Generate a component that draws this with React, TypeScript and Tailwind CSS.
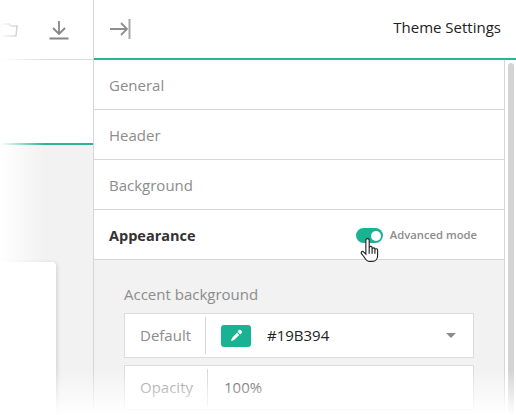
const rows = ["General", "Header", "Background"];

function LeftPane() {
  return (
    <div className="flex w-[93px] flex-col">
      <div className="flex h-[60px] items-center justify-between border-b border-[#dcdcdc] pr-[24px]">
        <svg width="18" height="16" viewBox="0 0 18 16" fill="none" stroke="#8a8a8a" strokeWidth="1.500">
          <path d="M1 2h8l2 2h6l-1 10H1z" />
        </svg>
        <svg width="20" height="20" viewBox="0 0 20 20" fill="none" stroke="#858585" strokeWidth="1.800">
          <path d="M10 1v13M4 8l6 6 6-6M.5 18.500h19" />
        </svg>
      </div>
      <div className="h-[85px] border-b-2 border-[#2bb396]" />
      <div className="flex-1 bg-[#f2f2f2] pt-[117px]">
        <div className="h-full w-[56px] rounded-tr-[4px] bg-white shadow-[1px_1px_4px_rgba(0,0,0,0.15)]" />
      </div>
    </div>
  );
}

function HandCursor() {
  return (
    <svg width="19" height="25" viewBox="0 0 18 24" fill="white" stroke="#222" strokeWidth="1.100" className="absolute top-[11px] left-[4px]">
      <path d="M5.500 2.200a1.600 1.600 0 0 1 3.200 0V9.500a1.400 1.400 0 0 1 2.800 0v1a1.400 1.400 0 0 1 2.700 0v1a1.300 1.300 0 0 1 2.600.3v4.700c0 3.500-2 6-5 6H9c-2.500 0-3.500-1.500-5-4L1.300 15c-.8-1.300.8-2.800 2-1.700l2.200 2.200z" />
      <path d="M8.700 9.500V15M11.500 10.500V15M14.200 11.500V15" fill="none" />
    </svg>
  );
}

function SettingsPane() {
  return (
    <div className="flex min-w-0 flex-1 flex-col border-l border-[#d6d6d6]">
      <div className="flex h-[60px] items-center justify-between border-b-2 border-[#2bb396] pr-[15px] pl-[16px]">
        <svg width="22" height="20" viewBox="0 0 22 20" fill="none" stroke="#8f8f8f" strokeWidth="1.800">
          <path d="M0 10h17M11 4l6 6-6 6" />
          <path d="M19.500 0v20" stroke="#a8a8a8" strokeWidth="2" />
        </svg>
        <span className="mb-[4px] text-[15px] text-[#222]">Theme Settings</span>
      </div>
      <div className="flex min-h-0 flex-1">
        <div className="flex w-[411px] flex-col border-r border-[#d6d6d6]">
          {rows.map((r) => (
            <div key={r} className="flex h-[50px] shrink-0 items-center border-b border-[#d6d6d6] pt-[2px] pl-[15px] text-[15px] text-[#8c8c8c]">
              {r}
            </div>
          ))}
          <div className="flex h-[50px] shrink-0 items-center justify-between border-b border-[#d6d6d6] pt-[2px] pr-[27px] pl-[15px]">
            <span className="text-[14.500px] font-bold text-[#333]">Appearance</span>
            <div className="relative flex items-center gap-[7px]">
              <div className="flex h-[15px] w-[27px] items-center justify-end rounded-full bg-[#19b394] pr-[2px]">
                <div className="h-[10px] w-[10px] rounded-full bg-white" />
              </div>
              <span className="text-[11.250px] font-semibold text-[#8c8c8c]">Advanced mode</span>
              <HandCursor />
            </div>
          </div>
          <div className="flex-1 bg-[#f2f2f2] px-[30px] pt-[24px]">
            <div className="text-[15px] leading-[20px] text-[#8c8c8c]">Accent background</div>
            <div className="mt-[9px] flex h-[45px] items-center border border-[#dcdcdc] bg-white">
              <div className="flex h-[37px] w-[81px] items-center border-r border-[#d6d6d6] pl-[15px] text-[15px] text-[#8c8c8c]">Default</div>
              <div className="ml-[15px] flex h-[22px] w-[30px] items-center justify-center rounded-[3px] bg-[#19b394]">
                <svg width="13" height="13" viewBox="0 0 12 12" fill="white">
                  <path d="M7.500 1.500c1-1 2.200-1 3 0s.7 2-.2 2.800L9.500 5 7 2.500zM6.500 3.500l2 2L4 10 1.500 11 1 10.500 2 8z" />
                </svg>
              </div>
              <span className="ml-[16px] text-[15px] text-[#222]">#19B394</span>
              <svg width="10" height="5" viewBox="0 0 10 5" fill="#8c8c8c" className="mr-[17px] ml-auto">
                <path d="M0 0h10L5 5z" />
              </svg>
            </div>
            <div className="mt-[7px] flex h-[45px] items-center border border-[#dcdcdc] bg-white">
              <div className="flex h-[37px] w-[83px] items-center border-r border-[#d6d6d6] pl-[15px] text-[15px] text-[#8c8c8c]">Opacity</div>
              <span className="ml-[16px] text-[15px] text-[#444]">100%</span>
            </div>
          </div>
        </div>
        <div className="flex-1 pt-[3px] pl-[3px]">
          <div className="h-full w-[6px] rounded-t-[3px] bg-[#d4d4d4]" />
        </div>
      </div>
    </div>
  );
}

export default function App() {
  return (
    <div className="relative flex h-[415px] w-[516px] overflow-hidden bg-white font-['Open_Sans',sans-serif]">
      <LeftPane />
      <SettingsPane />
      {/* soft fades over the screenshot edges */}
      <div className="pointer-events-none absolute inset-y-0 left-0 w-[45px] bg-gradient-to-r from-white to-transparent" />
      <div className="pointer-events-none absolute inset-x-0 bottom-0 h-[45px] bg-gradient-to-t from-white to-transparent" />
    </div>
  );
}
